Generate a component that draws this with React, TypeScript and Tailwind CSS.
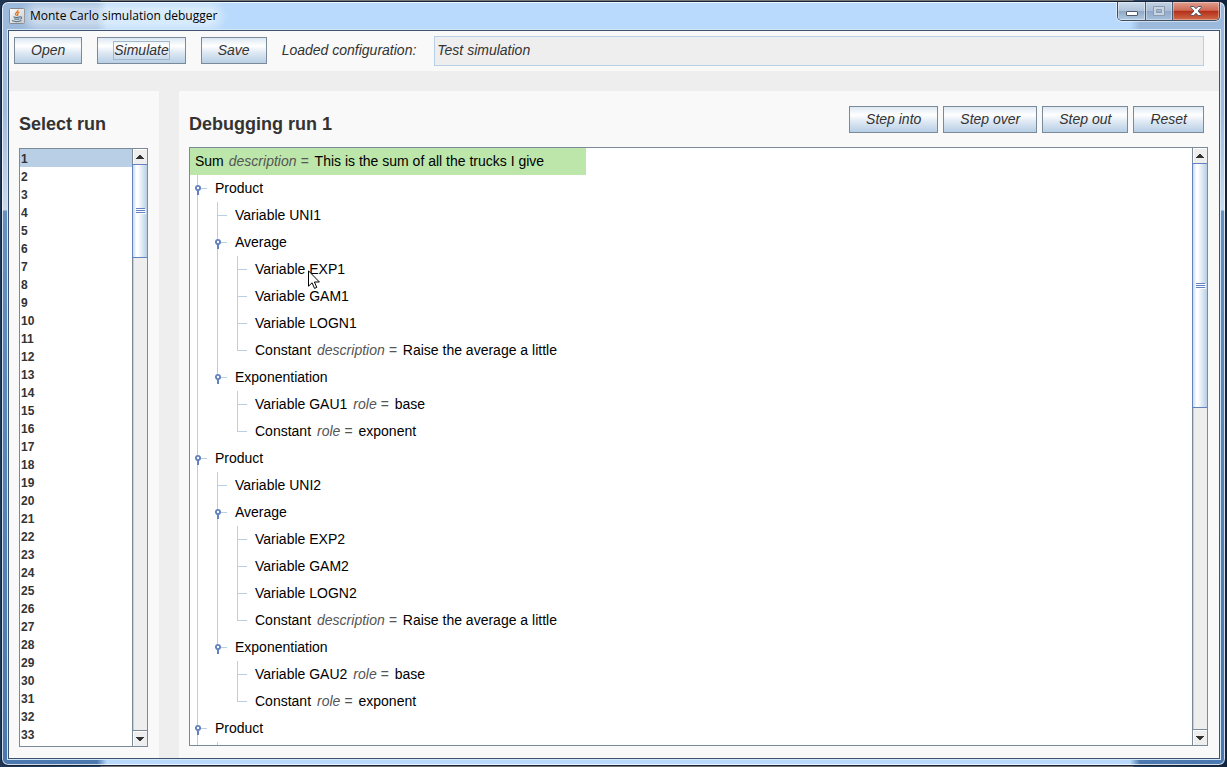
import React from "react";

type Guide = "line" | "tee" | "end" | "none";

type Row = {
  kind: string;
  guides: Guide[];
  handle?: boolean;
  attr?: string;
  value?: string;
};

const productRows = (n: number): Row[] => [
  { kind: "Product", guides: ["tee"], handle: true },
  { kind: `Variable UNI${n}`, guides: ["line", "tee"] },
  { kind: "Average", guides: ["line", "tee"], handle: true },
  { kind: `Variable EXP${n}`, guides: ["line", "line", "tee"] },
  { kind: `Variable GAM${n}`, guides: ["line", "line", "tee"] },
  { kind: `Variable LOGN${n}`, guides: ["line", "line", "tee"] },
  {
    kind: "Constant",
    guides: ["line", "line", "end"],
    attr: "description",
    value: "Raise the average a little",
  },
  { kind: "Exponentiation", guides: ["line", "end"], handle: true },
  { kind: `Variable GAU${n}`, guides: ["line", "none", "tee"], attr: "role", value: "base" },
  { kind: "Constant", guides: ["line", "none", "end"], attr: "role", value: "exponent" },
];

const rows: Row[] = [...productRows(1), ...productRows(2), ...productRows(3).slice(0, 1)];
const runs = Array.from({ length: 33 }, (_, i) => i + 1);

function GuideCell({ type, handle }: { type: Guide; handle?: boolean }) {
  return (
    <svg width="20" height="27" viewBox="0 0 20 27" className="block shrink-0" aria-hidden="true">
      {type !== "none" && (
        <rect x="2" y="0" width="1" height={type === "end" ? 14 : 27} fill="#b8cfe5" />
      )}
      {(type === "tee" || type === "end") && (
        <rect x="3" y="13" width="9" height="1" fill="#b8cfe5" />
      )}
      {handle && (
        <>
          <circle cx="3" cy="13" r="2.1" fill="#fff" stroke="#6382bf" strokeWidth="1.9" />
          <rect x="2" y="15" width="2" height="5" fill="#6382bf" />
        </>
      )}
    </svg>
  );
}

function MetalButton({ children, focused }: { children: React.ReactNode; focused?: boolean }) {
  return (
    <button
      type="button"
      className="flex h-[27px] shrink-0 items-center border border-[#7a8a99] bg-[linear-gradient(to_bottom,#dde8f3_0%,#ffffff_32%,#dfe9f4_58%,#b8cfe5_100%)] px-[15px] text-sm italic leading-4"
    >
      <span className={focused ? "border border-[#a3b8cc] pb-px" : "border border-transparent pb-px"}>
        {children}
      </span>
    </button>
  );
}

function ScrollBar({ thumb }: { thumb: string }) {
  return (
    <div className="flex w-[15px] shrink-0 flex-col border-l border-[#7a8a99] bg-[#eeeeee] shadow-[inset_1px_0_0_#b8cfe5]">
      <button
        type="button"
        aria-label="Scroll up"
        className="flex h-[15px] shrink-0 items-center justify-center shadow-[inset_1px_1px_0_#fff]"
      >
        <svg width="8" height="4" viewBox="0 0 8 4" shapeRendering="crispEdges">
          <path d="M3 0h2v1h1v1h1v1h1v1H0V3h1V2h1V1h1z" fill="#333" />
        </svg>
      </button>
      <div className="-ml-px min-h-0 flex-1">
        <div
          className={`${thumb} flex items-center justify-center border-y border-l border-[#6382bf] bg-[linear-gradient(to_right,#c8daec_0%,#ffffff_25%,#ffffff_35%,#b8cfe5_100%)] pl-0.5`}
        >
          <svg width="10" height="6" viewBox="0 0 10 6" shapeRendering="crispEdges">
            <path d="M1 1h9v1H1zM1 3h9v1H1zM1 5h9v1H1z" fill="#fff" />
            <path d="M0 0h9v1H0zM0 2h9v1H0zM0 4h9v1H0z" fill="#6382bf" />
          </svg>
        </div>
      </div>
      <button
        type="button"
        aria-label="Scroll down"
        className="flex h-4 shrink-0 items-center justify-center border-t border-[#7a8a99] shadow-[inset_1px_1px_0_#fff]"
      >
        <svg width="8" height="4" viewBox="0 0 8 4" shapeRendering="crispEdges">
          <path d="M0 0h8v1H7v1H6v1H5v1H3V3H2V2H1V1H0z" fill="#333" />
        </svg>
      </button>
    </div>
  );
}

function JavaIcon() {
  return (
    <svg width="16" height="16" viewBox="0 0 16 16" aria-hidden="true">
      <defs>
        <linearGradient id="tile" x1="0" y1="0" x2="1" y2="1">
          <stop offset="0" stopColor="#ffffff" />
          <stop offset="1" stopColor="#c4c6c9" />
        </linearGradient>
      </defs>
      <rect x="0.5" y="0.5" width="15" height="15" rx="1" fill="url(#tile)" stroke="#85888d" />
      <path
        d="M8.800 2c.9 1.700-2.900 2.500-2.300 4.300.2.600.9 1 1.100 1.500M10.300 4.200C8.500 5 8.200 5.800 8.700 6.700c.3.500.1.900-.4 1.300"
        fill="none"
        stroke="#e8761c"
        strokeWidth="1.300"
      />
      <path
        d="M4.500 8.800c1.500.8 5 .7 6.500 0M5.200 10.700c1.500.6 3.800.6 5.200 0M3 12.600c2.500 1.200 7 1.100 9.500 0M11 9c2.200-.5 2.300 1.500.2 2.100"
        fill="none"
        stroke="#4f7088"
        strokeWidth="1.100"
      />
    </svg>
  );
}

function TitleBar() {
  return (
    <header className="flex h-[27px] shrink-0 items-start pl-0.5">
      <div className="mt-1.5 flex items-center gap-[5px]">
        <JavaIcon />
        <h1 className="rounded-full bg-white/45 font-['Open_Sans',sans-serif] text-xs leading-4 text-black shadow-[0_0_10px_5px_rgba(255,255,255,0.45)]">
          Monte Carlo simulation debugger
        </h1>
      </div>
      <div className="ml-auto mr-px flex h-[19px] overflow-hidden rounded-b-[5px] border border-t-0 border-[#3e4d60] shadow-[0_0_0_1px_rgba(255,255,255,0.5)]">
        <button
          type="button"
          aria-label="Minimize"
          className="flex w-7 items-center justify-center border-r border-[#4b5c72] bg-[linear-gradient(to_bottom,#cddcec_0%,#b0c4da_48%,#8ea8c4_52%,#b3cbe4_100%)] pt-1 shadow-[inset_0_0_0_1px_rgba(255,255,255,0.4)]"
        >
          <svg width="12" height="5" viewBox="0 0 12 5">
            <rect x="0.5" y="0.5" width="11" height="4" rx="0.5" fill="#fff" stroke="#535866" />
          </svg>
        </button>
        <button
          type="button"
          aria-label="Maximize"
          className="flex w-[27px] items-center justify-center border-r border-[#4b5c72] bg-[linear-gradient(to_bottom,#c2d2e4_0%,#aabdd4_48%,#8fa9c8_52%,#a5bedb_100%)] shadow-[inset_0_0_0_1px_rgba(255,255,255,0.35)]"
        >
          <svg width="12" height="10" viewBox="0 0 12 10">
            <path d="M.5.5h11v9H.5zM3.500 3.500h5v3h-5z" fill="#c8d4e2" fillRule="evenodd" stroke="#8b9bb0" />
          </svg>
        </button>
        <button
          type="button"
          aria-label="Close"
          className="flex w-[46px] items-center justify-center bg-[linear-gradient(to_bottom,#e0a090_0%,#cf6a55_46%,#b5301a_52%,#d06a48_100%)] shadow-[inset_0_0_0_1px_rgba(255,255,255,0.35)]"
        >
          <svg width="12" height="10" viewBox="0 0 12 10">
            <path
              d="M.8.5h3L6 2.700 8.200.5h3v1L8 5l3.200 3.500v1h-3L6 7.300 3.800 9.500h-3v-1L4 5 .8 1.500z"
              fill="#fff"
              stroke="#535866"
            />
          </svg>
        </button>
      </div>
    </header>
  );
}

export default function App() {
  return (
    <div className="h-screen bg-[linear-gradient(to_right,#1f3654_0,#2a4566_100px,#77787a_101px,#77787a_calc(100%-94px),#2a4566_calc(100%-93px),#10233c_100%)] p-px font-['Liberation_Sans',Arial,sans-serif] text-[#333333]">
      <div className="relative flex h-full flex-col overflow-hidden rounded-[7px] border border-[#172334] bg-[linear-gradient(to_right,transparent_95px,#b9dafc_105px,#b9dafc_calc(100%-95px),transparent_calc(100%-85px)),linear-gradient(to_bottom,#9bb9dc_0,#a0bcdd_110px,#c9daec_208px,#6490c2_209px,#4b78ae_100%)] pb-[5px] pl-[5px] pr-1 shadow-[inset_0_0_0_1px_rgba(255,255,255,0.75)]">
        <TitleBar />
        <div className="flex min-h-0 flex-1 flex-col border border-[#d5e6f7]">
          <div className="flex min-h-0 flex-1 flex-col border border-[#3d5470] bg-[#eeeeee]">
            <div className="flex h-10 shrink-0 items-start gap-[15px] bg-[#f9f9f9] pl-[5px] pr-[15px] pt-[5px] text-sm italic">
              <div className="flex h-[29px] shrink-0 items-center gap-[15px]">
                <MetalButton>Open</MetalButton>
                <MetalButton focused>Simulate</MetalButton>
                <MetalButton>Save</MetalButton>
                <label htmlFor="configuration" className="pb-px pr-[3px] leading-5">
                  Loaded configuration:
                </label>
              </div>
              <input
                id="configuration"
                readOnly
                defaultValue="Test simulation"
                className="h-[30px] min-w-0 flex-1 border border-[#b8cfe5] bg-[#eeeeee] px-0.5 pb-0.5 italic outline-none"
              />
            </div>

            <div className="mt-5 flex min-h-0 flex-1 gap-5">
              <section className="flex w-[150px] shrink-0 flex-col bg-[#f9f9f9] pb-[11px] pl-2.5 pr-[11px]">
                <h2 className="flex h-[57px] shrink-0 items-end pb-3 text-lg font-bold leading-6">Select run</h2>
                <div className="flex min-h-0 flex-1 border border-[#7a8a99] bg-white">
                  <ul role="listbox" aria-label="Select run" className="min-w-0 flex-1 overflow-hidden text-xs font-bold">
                    {runs.map((n) => (
                      <li
                        key={n}
                        role="option"
                        aria-selected={n === 1}
                        className={
                          n === 1
                            ? "h-[18px] bg-[#b8cfe5] pl-px pt-px leading-[18px]"
                            : "h-[18px] pl-px pt-px leading-[18px]"
                        }
                      >
                        {n}
                      </li>
                    ))}
                  </ul>
                  <ScrollBar thumb="h-[94px]" />
                </div>
              </section>

              <section className="flex min-w-0 flex-1 flex-col bg-[#f9f9f9] pb-3 pl-2.5 pr-[11px]">
                <div className="flex h-14 shrink-0 items-end justify-between pr-1">
                  <h2 className="pb-[11px] text-lg font-bold leading-6">Debugging run 1</h2>
                  <div className="flex gap-[5px] pb-3.5">
                    <MetalButton>Step into</MetalButton>
                    <MetalButton>Step over</MetalButton>
                    <MetalButton>Step out</MetalButton>
                    <MetalButton>Reset</MetalButton>
                  </div>
                </div>
                <div className="flex min-h-0 flex-1 border border-[#7a8a99] bg-white">
                  <div className="relative min-w-0 flex-1 overflow-hidden text-sm leading-[26px] text-black">
                    <div className="flex h-[27px] w-[396px] whitespace-nowrap bg-[#bde6aa] pl-[5px]">
                      <span>Sum</span>
                      <span className="ml-[5px] italic text-[#555555]">description =</span>
                      <span className="ml-1.5">This is the sum of all the trucks I give</span>
                    </div>
                    <ul role="tree" aria-label="Debugging run 1">
                      {rows.map((row, i) => (
                        <li
                          key={i}
                          role="treeitem"
                          aria-level={row.guides.length}
                          className="flex h-[27px] whitespace-nowrap pl-[5px]"
                        >
                          {row.guides.map((g, j) => (
                            <GuideCell key={j} type={g} handle={row.handle && j === row.guides.length - 1} />
                          ))}
                          <span>{row.kind}</span>
                          {row.attr && (
                            <>
                              <span className="ml-1.5 italic text-[#555555]">{row.attr} =</span>
                              <span className="ml-1.5">{row.value}</span>
                            </>
                          )}
                        </li>
                      ))}
                      <li aria-hidden="true" className="flex h-[27px] pl-[5px]">
                        <GuideCell type="line" />
                        <GuideCell type="tee" />
                      </li>
                    </ul>
                    <svg
                      width="13"
                      height="20"
                      viewBox="0 0 13 20"
                      className="absolute left-[118px] top-[122px]"
                      aria-hidden="true"
                    >
                      <path
                        d="M.5.8v15.400l3.600-3.400 2.400 5.600 2.300-1-2.400-5.400h5z"
                        fill="#fff"
                        stroke="#000"
                        strokeWidth="1"
                      />
                    </svg>
                  </div>
                  <ScrollBar thumb="h-[245px]" />
                </div>
              </section>
            </div>
          </div>
        </div>
      </div>
    </div>
  );
}
